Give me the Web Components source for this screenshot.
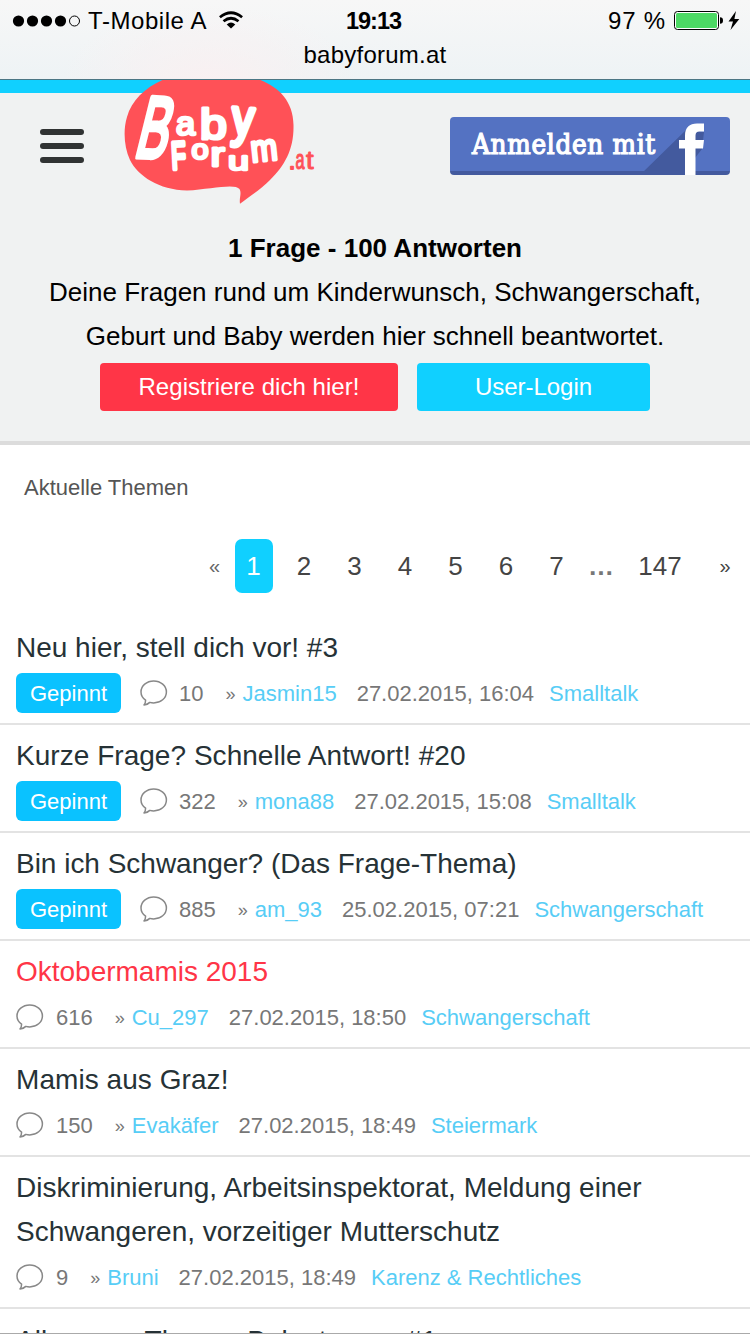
<!DOCTYPE html>
<html lang="de">
<head>
<meta charset="utf-8">
<title>babyforum.at</title>
<style>
html,body{margin:0;padding:0}
body{width:750px;height:1334px;overflow:hidden;background:#fff;font-family:"Liberation Sans",Arial,sans-serif}
</style>
</head>
<body>
<baby-app></baby-app>
<script>
const define=(name,html,setup)=>customElements.define(name,class extends HTMLElement{
  connectedCallback(){
    if(this.shadowRoot)return;
    const t=document.createElement('template');
    t.innerHTML=typeof html==='function'?html(this):html;
    this.attachShadow({mode:'open'}).appendChild(t.content.cloneNode(true));
    if(setup)setup(this);
  }
});

/* Text whose tracking is adjusted so that it fills the width given in "w". */
define('fit-text','<style>:host{display:block;white-space:nowrap;flex:none}span{display:inline-block}</style><span><slot></slot></span>',el=>{
  const w=+el.getAttribute('w');
  if(!w)return;
  const s=el.shadowRoot.querySelector('span');
  const n=el.textContent.length;
  s.style.letterSpacing=((w-s.getBoundingClientRect().width)/n)+'px';
});

define('status-bar',`<style>
:host{display:block;height:80px;box-sizing:border-box;border-bottom:1px solid #4b7684;background:linear-gradient(#f7f7f7,#eef3f5);color:#000;font-size:24px}
.bg{height:79px;background:radial-gradient(ellipse 150px 80px at 210px 85px,#faf0f1,#faf0f100)}
.row{display:grid;grid-template-columns:1fr auto 1fr;height:41px;align-items:center}
.l{display:flex;align-items:center;padding-left:12px}
.r{display:flex;align-items:center;justify-content:flex-end;padding-right:9px}
.dots{display:block;margin-right:6px}
.t{font-weight:bold;font-size:23.500px;margin-right:3px;padding-top:2px}
.url{display:flex;justify-content:center;line-height:28px}
svg{display:block;flex:none}
</style>
<div class="bg"><div class="row">
<div class="l"><svg class="dots" width="70" height="14"><g fill="#000"><circle cx="6.5" cy="7" r="5.6"/><circle cx="20.5" cy="7" r="5.6"/><circle cx="34.5" cy="7" r="5.6"/><circle cx="48.5" cy="7" r="5.6"/></g><circle cx="62.5" cy="7" r="5" fill="none" stroke="#000"/></svg>
<fit-text w="119">T-Mobile A</fit-text>
<svg style="margin-left:11px;margin-top:-1px" width="26" height="18" viewBox="0 0 26 18" fill="none" stroke="#000" stroke-width="2.7"><path d="M1.900 6.300Q13-2.800 24.100 6.300M5.500 10.300Q13 4.200 20.500 10.300"/><path d="M8.700 13.400Q13 9.600 17.300 13.400L13 17.600Z" fill="#000" stroke="none"/></svg></div>
<fit-text class="t" w="55">19:13</fit-text>
<div class="r"><fit-text w="58">97 %</fit-text>
<svg style="margin-left:7px" width="68" height="24" viewBox="0 0 68 24"><rect x="1.500" y="2.500" width="44" height="18" rx="3" fill="#fff" stroke="#000"/><rect x="3" y="4" width="41" height="15" rx="1.500" fill="#4cd964"/><path d="M47 8.200q3 0 3 3.300t-3 3.300Z"/><path d="M63 2L55.500 12.500H60L57.500 21L66.300 10H61.400Z"/></svg></div>
</div><div class="url"><fit-text w="143">babyforum.at</fit-text></div></div>`);

define('menu-icon','<style>:host{display:grid;gap:8px;width:44px;flex:none}i{height:6px;border-radius:3px;background:#303333}</style><i></i><i></i><i></i>');

define('forum-logo',`<style>:host{display:block;width:220px;height:131px;flex:none}svg{display:block}text{font-family:"Liberation Sans",Arial,sans-serif;stroke-linejoin:round;stroke-linecap:round;vector-effect:non-scaling-stroke}</style>
<svg width="220" height="131" viewBox="110 80 220 131">
<path fill="#ff5157" d="M210 71C247 72 293 82 293.500 125C294 149 285 165 270 180C260 190 249 197 240 203.700C239 198 242 193 239.500 189C235 183 211 189 187 190.500C159 190 138 176 130 160C124 147 123 130 127 117C135 88 171 70 210 71Z"/>
<g fill="#fff" stroke="#fff">
<text transform="translate(133 156.500) rotate(3) skewX(-11) scale(.55 1)" font-size="87" stroke-width="4.500">B</text>
<text transform="translate(176 134.500) scale(1.040 1)" font-size="33" stroke-width="2.800">a</text>
<text transform="translate(200 139) scale(1.150 1)" font-size="42" stroke-width="3.500">b</text>
<text transform="translate(231 135) rotate(4) scale(.84 1)" font-size="52" stroke-width="4.500">y</text>
<text transform="translate(172 169) rotate(-3) scale(.62 1)" font-size="38" stroke-width="4">F</text>
<text transform="translate(191.500 159.300) scale(1.100 1)" font-size="28" stroke-width="2.800">o</text>
<text transform="translate(210.500 165.500) scale(1.250 1)" font-size="34" stroke-width="3.200">r</text>
<text transform="translate(228 170) scale(1.450 1)" font-size="26" stroke-width="3">u</text>
<text transform="translate(252 162) rotate(-6) scale(.86 1)" font-size="37" stroke-width="3.200">m</text>
</g>
<g fill="#ff5157" stroke="#ff5157"><text x="289" y="169" font-size="22" stroke-width="1.800">.</text><text transform="translate(295.500 169) scale(.6 1)" font-size="27" stroke-width="1">a</text><text transform="translate(306 169) scale(1.100 1)" font-size="25" stroke-width="1">t</text></g>
</svg>`);

define('facebook-login',`<style>
:host{display:flex;width:280px;height:58px;flex:none;border-radius:4px;overflow:hidden;background:linear-gradient(#5472c2 54px,#435a9e 54px)}
fit-text{font:27.500px/54px "DejaVu Serif Condensed","DejaVu Serif",serif;font-stretch:condensed;color:#fff;-webkit-text-stroke:1.200px #fff;margin:0 0 0 22px}svg{display:block;flex:none;margin-left:-15px}
</style><fit-text w="184">Anmelden mit</fit-text>
<svg width="89" height="58" viewBox="191 0 89 58"><path fill="#435a9e" d="M190 58L236 13L254 15L252 32L245 41V58Z"/><path fill="#fff" d="M235 58V31.500H229V23H235V18.500C235 10.500 239.500 6.500 247 6.500H254V14.500H249.500Q245.500 14.500 245.500 18.500V23H254L253 31.500H245.500V58Z"/></svg>`);

define('cta-button',e=>`<style>:host{display:flex;justify-content:center;height:48px;border-radius:4px;color:#fff;font-size:24px;line-height:48px;width:${e.getAttribute('width')}px;background:${e.getAttribute('color')}}</style><slot></slot>`);

define('site-header',`<style>
:host{display:block;height:365px;box-sizing:border-box;background:#f0f2f2;border-top:13px solid #10d0ff;border-bottom:4px solid #dcdcdc;color:#000;font-size:26px}
.top{display:flex;align-items:flex-start;height:133px;padding-left:40px}
menu-icon{margin-top:36px}forum-logo{margin:-13px 120px 0 26px}facebook-login{margin-top:24px}
.p{display:flex;flex-direction:column;align-items:center;line-height:44px}
.b{font-weight:bold}
.btns{display:flex;justify-content:center;gap:19px;margin-top:5px}
</style>
<div class="top"><menu-icon></menu-icon><forum-logo></forum-logo><facebook-login></facebook-login></div>
<div class="p"><fit-text class="b" w="294">1 Frage - 100 Antworten</fit-text><fit-text w="652">Deine Fragen rund um Kinderwunsch, Schwangerschaft,</fit-text><fit-text w="578.500">Geburt und Baby werden hier schnell beantwortet.</fit-text></div>
<div class="btns"><cta-button width="298" color="#ff3547"><fit-text w="221">Registriere dich hier!</fit-text></cta-button><cta-button width="233" color="#10d0ff"><fit-text w="117">User-Login</fit-text></cta-button></div>`);

define('page-nav',`<style>
:host{display:flex;justify-content:flex-end;height:54px;line-height:54px;font-size:26px;color:#444;padding-right:18px}
span{width:38px;text-align:center;margin-right:12.500px}
.on{background:#10d0ff;color:#fff;border-radius:7px}
.a{font-size:20px;width:14px;margin-right:13px;color:#666}
.e{font-weight:bold;color:#777;width:26px;margin:0 24px 0 0}
.n{width:44px;margin-right:36px}.z{width:14px;margin:0;color:#444}
</style><span class="a">«</span><span class="on">1</span><span>2</span><span>3</span><span>4</span><span>5</span><span>6</span><span>7</span><span class="e">…</span><span class="n">147</span><span class="a z">»</span>`);

define('comment-icon','<style>:host{display:block;width:28px;height:26px;flex:none}svg{display:block}</style><svg width="28" height="26" viewBox="0 0 28 26" fill="none" stroke="#888" stroke-width="1.500" stroke-linejoin="round"><path d="M5.600 20.200C3 18.300 1 15.300 1 12C1 5.800 6.700 1 13.700 1S26.400 5.800 26.400 12S20.700 22.900 13.700 22.900Q11.600 22.900 9.800 22.400Q7.600 24.600 4 24.900Q5.600 23 5.600 20.200Z"/></svg>');

define('topic-row',e=>{const a=k=>(e.getAttribute(k)||'').replace(/&/g,'&amp;');return `<style>
:host{display:block;padding:9px 16px 8px;border-bottom:2px solid #e3e3e3;font-size:22px;color:#777}
.t{font-size:28px;line-height:44px;color:${e.hasAttribute('hot')?'#ff3547':'#263236'}}
.m{display:flex;align-items:center;height:44px;margin-top:1px;white-space:nowrap}
.m span:not(.pin){padding-top:2px}
.pin{width:105px;height:39px;line-height:39px;padding-top:1px;border-radius:6px;background:#0ac2ff;color:#fff;text-align:center;margin-right:19px}
.c{margin-left:12px}.pin~.c{margin-left:11px}.q{margin-left:22px;width:12px;font-size:18px}.u{margin-left:5px}.d{margin-left:20px}.g{margin-left:15px}
.u,.g{color:#57cdf6}
</style><div class="t"><slot></slot></div>
<div class="m">${e.hasAttribute('pinned')?'<span class="pin">Gepinnt</span>':''}<comment-icon></comment-icon><span class="c">${a('count')}</span><span class="q">»</span><span class="u">${a('user')}</span><span class="d">${a('date')}</span><span class="g">${a('cat')}</span></div>`});

define('baby-app',`<style>
:host{display:block;height:1334px;overflow:hidden;position:relative}
.h{font-size:22px;line-height:30px;color:#555;padding:28px 24px 0;height:66px}
page-nav{margin-bottom:24px}
.last{display:block;height:25px;overflow:hidden;padding:10px 16px 0;box-sizing:border-box;font-size:28px;line-height:44px;color:#263236}
.end{position:absolute;left:0;right:0;bottom:0;height:1px;background:#aaa}
</style>
<status-bar></status-bar><site-header></site-header>
<div class="h"><fit-text w="164.500">Aktuelle Themen</fit-text></div>
<page-nav></page-nav>
<topic-row pinned count="10" user="Jasmin15" date="27.02.2015, 16:04" cat="Smalltalk"><fit-text w="322">Neu hier, stell dich vor! #3</fit-text></topic-row>
<topic-row pinned count="322" user="mona88" date="27.02.2015, 15:08" cat="Smalltalk"><fit-text w="449.500">Kurze Frage? Schnelle Antwort! #20</fit-text></topic-row>
<topic-row pinned count="885" user="am_93" date="25.02.2015, 07:21" cat="Schwangerschaft"><fit-text w="500.500">Bin ich Schwanger? (Das Frage-Thema)</fit-text></topic-row>
<topic-row hot count="616" user="Cu_297" date="27.02.2015, 18:50" cat="Schwangerschaft"><fit-text w="252">Oktobermamis 2015</fit-text></topic-row>
<topic-row count="150" user="Evakäfer" date="27.02.2015, 18:49" cat="Steiermark"><fit-text w="212.500">Mamis aus Graz!</fit-text></topic-row>
<topic-row count="9" user="Bruni" date="27.02.2015, 18:49" cat="Karenz &amp; Rechtliches"><fit-text w="625.500">Diskriminierung, Arbeitsinspektorat, Meldung einer</fit-text><fit-text w="484">Schwangeren, vorzeitiger Mutterschutz</fit-text></topic-row>
<div class="last"><fit-text w="421">Alles zum Thema: Baby tragen #1</fit-text></div>
<div class="end"></div>`);
</script>
</body>
</html>
